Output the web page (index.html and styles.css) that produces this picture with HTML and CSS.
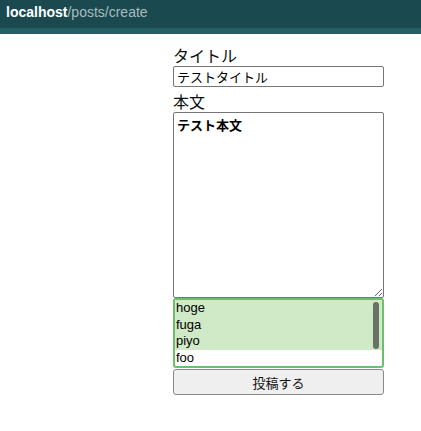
FILE: index.html
```html
<!DOCTYPE html>
<html>
  <head>
    <meta charset="UTF-8">
    <link rel="stylesheet" href="styles.css">
    <title>posts/create</title>
  </head>
  <body>
    <div class="header">
      <span class="host">localhost</span><span class="path">/posts/create</span>
    </div>
    <div class="strip"></div>
    <form class="post-form">
      <label class="label" for="title">タイトル</label>
      <input type="text" id="title" class="title-input" value="テストタイトル">
      <label class="label" for="body">本文</label>
      <textarea id="body" class="body-input">テスト本文</textarea>
      <div class="tags">
        <div class="tag selected">hoge</div>
        <div class="tag selected">fuga</div>
        <div class="tag selected">piyo</div>
        <div class="tag">foo</div>
        <div class="thumb"></div>
      </div>
      <button type="button" class="submit">投稿する</button>
    </form>
  </body>
</html>
```

FILE: styles.css
```css
body {
    margin: 0;
    font-family: "Liberation Sans", "Noto Sans CJK JP", sans-serif;
    background: #fff;
}

.header {
    height: 28px;
    background-color: #1a4950;
    padding-left: 6px;
    font-size: 14px;
    line-height: 25px;
}

.host {
    color: #fff;
    font-weight: bold;
}

.path {
    color: #a7bcbf;
}

.strip {
    height: 6px;
    background-color: #235f64;
}

.post-form {
    display: flex;
    flex-direction: column;
    width: 211px;
    margin-left: 173px;
    padding-top: 10px;
}

.label {
    font-family: "Noto Sans CJK JP", sans-serif;
    font-size: 16px;
    line-height: 22px;
    color: #111;
}

.title-input {
    box-sizing: border-box;
    height: 21px;
    margin: 0 0 3px;
    padding: 0 3px;
    border: 1px solid #767676;
    border-radius: 2px;
    font-family: "Noto Sans CJK JP", sans-serif;
    font-size: 13px;
}

.body-input {
    box-sizing: border-box;
    height: 186px;
    margin: 0;
    padding: 2px 3px;
    border: 1px solid #767676;
    border-radius: 2px;
    font-family: "Noto Sans CJK JP", sans-serif;
    font-size: 13px;
    font-weight: bold;
    resize: vertical;
}

.tags {
    position: relative;
    box-sizing: border-box;
    height: 70px;
    border: 2px solid #6cbf6c;
    border-radius: 3px;
    overflow: hidden;
}

.tag {
    height: 16.5px;
    line-height: 16px;
    padding-left: 1px;
    font-size: 13px;
    color: #000;
}

.tag.selected {
    background-color: #d0e9c6;
}

.thumb {
    position: absolute;
    top: 2px;
    right: 3px;
    width: 6px;
    height: 47px;
    border-radius: 3px;
    background-color: #687265;
}

.submit {
    height: 26px;
    margin-top: 1px;
    border: 1px solid #8a8a8a;
    border-radius: 3px;
    background-color: #efefef;
    font-family: "Noto Sans CJK JP", sans-serif;
    font-size: 13px;
    color: #111;
}
```
